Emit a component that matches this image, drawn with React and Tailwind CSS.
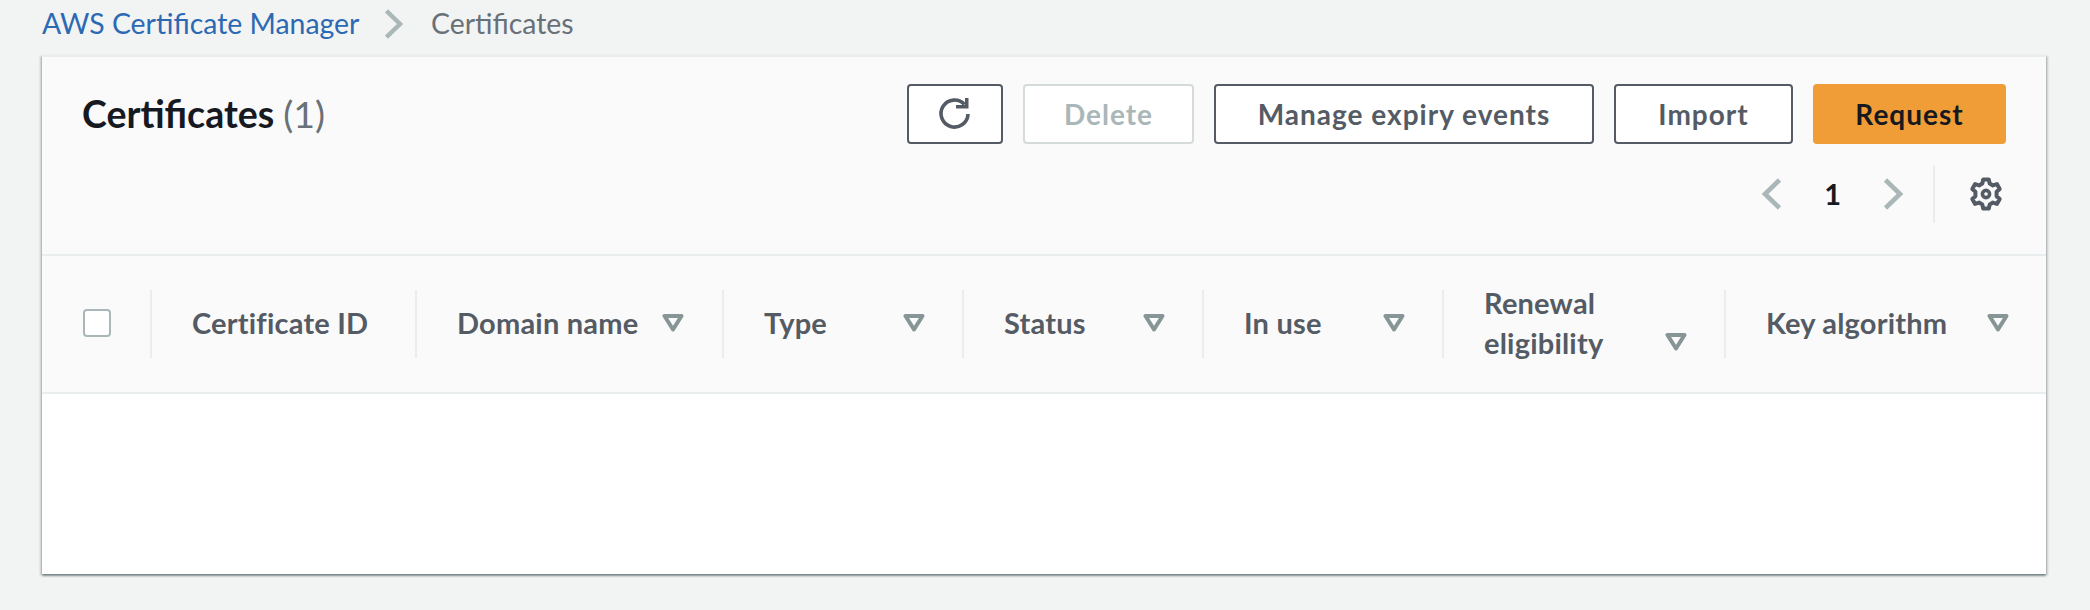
const F = "font-['Lato','Liberation_Sans',sans-serif]";

function Filter() {
  return (
    <svg width="22" height="18" viewBox="0 0 22 18" className="shrink-0">
      <path d="M2.5 2 H19.5 L11 15.5 Z" fill="none" stroke="#879596" strokeWidth="4" strokeLinejoin="round" />
    </svg>
  );
}

function Chevron({ left, className }) {
  return (
    <svg width="22" height="34" viewBox="0 0 22 34" className={className}>
      <path d={left ? "M18.5 3 L4 17 L18.5 31" : "M3.5 3 L18 17 L3.5 31"} fill="none" stroke="#aab7b8" strokeWidth="4.6" />
    </svg>
  );
}

function Btn({ children, className }) {
  return (
    <button className={`h-[60px] flex items-center justify-center rounded-[4px] border-2 border-[#545b64] bg-white text-[28px] font-bold text-[#545b64] tracking-[1px] ${className}`}>
      {children}
    </button>
  );
}

function Th({ className, children, filter = true, iconClass = "" }) {
  return (
    <div className={`relative flex h-full items-center justify-between pb-[2px] pl-[42px] text-[29px] leading-[40px] font-bold tracking-[0.2px] text-[#545b64] ${className}`}>
      <span>{children}</span>
      {filter && <span className={iconClass}><Filter /></span>}
      <span className="absolute left-0 top-[34px] h-[68px] w-[2px] bg-[#eaeded]" />
    </div>
  );
}

export default function App() {
  return (
    <div className={`h-[610px] w-[2090px] overflow-hidden bg-[#f2f3f3] ${F}`}>
      <nav className="flex h-[55px] items-start pl-[42px] pt-[5px] text-[28.4px] leading-[36px]">
        <span className="text-[#2c69b3] w-[316px] whitespace-nowrap">AWS Certificate Manager</span>
        <Chevron className="ml-[25px] mt-[3px] w-[21px] h-[32px]" />
        <span className="ml-[27px] text-[#687078]">Certificates</span>
      </nav>
      <section className="ml-[42px] mr-[44px] h-[519px] bg-white border-t-2 border-[#eaeded] shadow-[0_2px_2px_0_rgba(0,28,36,0.4),2px_1px_2px_0_rgba(0,28,36,0.15),-2px_1px_2px_0_rgba(0,28,36,0.15)]">
        <header className="h-[199px] bg-[#fafafa] border-b-2 border-[#eaeded] pl-[40px] pr-[40px] pt-[27px]">
          <div className="flex items-center justify-between">
            <h1 className="text-[37.5px] font-bold text-[#16191f] leading-[60px]">
              Certificates <span className="font-normal text-[#687078]">(1)</span>
            </h1>
            <div className="flex gap-[20px]">
              <Btn className="w-[96px]">
                <svg width="36" height="36" viewBox="0 0 36 36">
                  <path d="M27.5 8.5 A13.5 13.5 0 1 0 31 18" fill="none" stroke="#545b64" strokeWidth="3.6" />
                  <path d="M19 12.5 H31.5 V2 H28 V9 H19 Z" fill="#545b64" />
                </svg>
              </Btn>
              <button className="h-[60px] w-[171px] rounded-[4px] border-2 border-[#d5dbdb] bg-white text-[28px] font-bold text-[#aab7b8] tracking-[1px]">Delete</button>
              <Btn className="w-[380px]">Manage expiry events</Btn>
              <Btn className="w-[179px]">Import</Btn>
              <button className="h-[60px] w-[193px] rounded-[4px] bg-[#f09d38] text-[28px] font-bold text-[#16191f] tracking-[1px]">Request</button>
            </div>
          </div>
          <div className="mt-[21px] flex items-center justify-end pr-[3px]">
            <Chevron left />
            <span className="mx-[41px] text-[29px] font-bold text-[#16191f] leading-[32px]">1</span>
            <Chevron />
            <span className="ml-[29px] h-[58px] w-[2px] bg-[#eaeded]" />
            <svg width="34" height="34" viewBox="0 0 34 34" className="ml-[34px]">
              <path
                d="M14.2 2.5 H19.8 L20.7 6.6 L23.9 8.4 L27.9 7.1 L30.7 12 L27.6 14.8 V19.2 L30.7 22 L27.9 26.9 L23.9 25.6 L20.7 27.4 L19.8 31.5 H14.2 L13.3 27.4 L10.1 25.6 L6.1 26.9 L3.3 22 L6.4 19.2 V14.8 L3.3 12 L6.1 7.1 L10.1 8.4 L13.3 6.6 Z"
                fill="none" stroke="#545b64" strokeWidth="4" strokeLinejoin="round"
              />
              <circle cx="17" cy="17" r="3.6" fill="none" stroke="#545b64" strokeWidth="3.6" />
            </svg>
          </div>
        </header>
        <div className="flex h-[138px] border-b-2 border-[#eaeded] bg-[#fafafa]">
          <div className="flex h-full w-[108px] items-center pb-[2px] pl-[41px]">
            <span className="h-[28px] w-[28px] rounded-[4px] border-2 border-[#aab7b8] bg-white" />
          </div>
          <Th className="w-[265px]" filter={false}>Certificate ID</Th>
          <Th className="w-[307px] pr-[38px]">Domain name</Th>
          <Th className="w-[240px] pr-[37px]">Type</Th>
          <Th className="w-[240px] pr-[37px]">Status</Th>
          <Th className="w-[240px] pr-[37px]">In use</Th>
          <Th className="w-[282px] pr-[37px]" iconClass="mt-[38px]">
            Renewal<br />eligibility
          </Th>
          <Th className="w-[322px] pr-[37px]">Key algorithm</Th>
        </div>
      </section>
    </div>
  );
}
